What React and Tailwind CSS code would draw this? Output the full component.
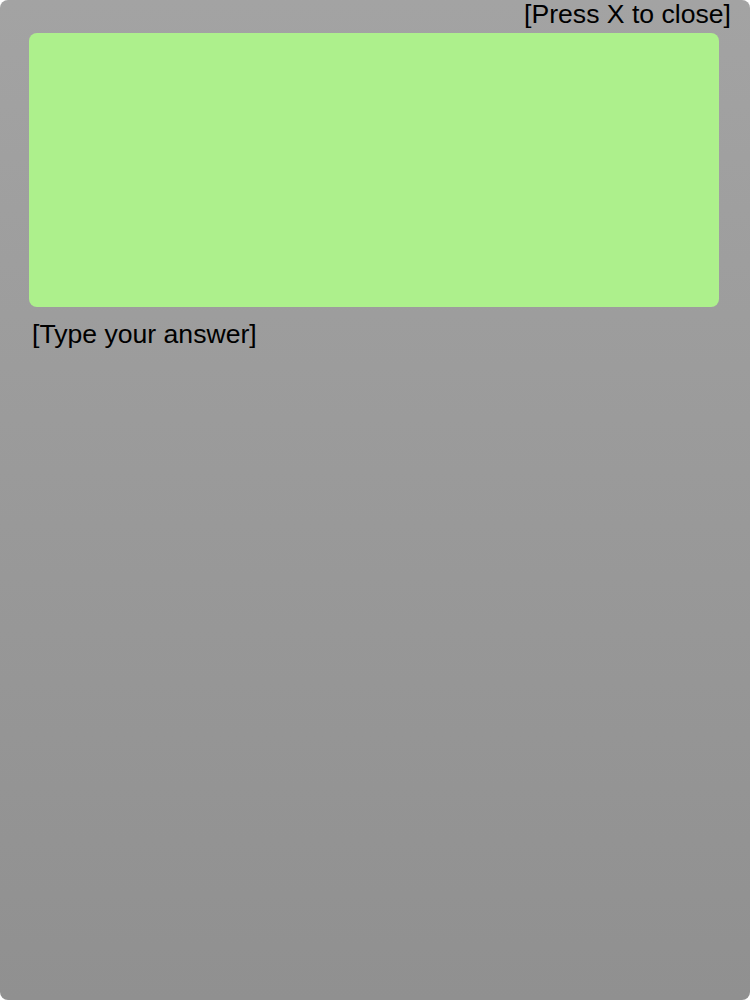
export default function App() {
  return (
    <div className="w-[750px] h-[1000px] rounded-lg bg-gradient-to-b from-[#a3a3a3] to-[#909090] text-black font-['Liberation_Sans',Arial,sans-serif] flex flex-col">
      <div className="flex justify-end pr-[19px] h-[33px] text-[26.6px] leading-[28px]">
        [Press X to close]
      </div>
      <div className="ml-[29px] mr-[31px] h-[274px] rounded-lg bg-[#adf08c]"></div>
      <div className="pl-[32px] pt-[12px] text-[26.6px] leading-[30px]">[Type your answer]</div>
    </div>
  );
}
